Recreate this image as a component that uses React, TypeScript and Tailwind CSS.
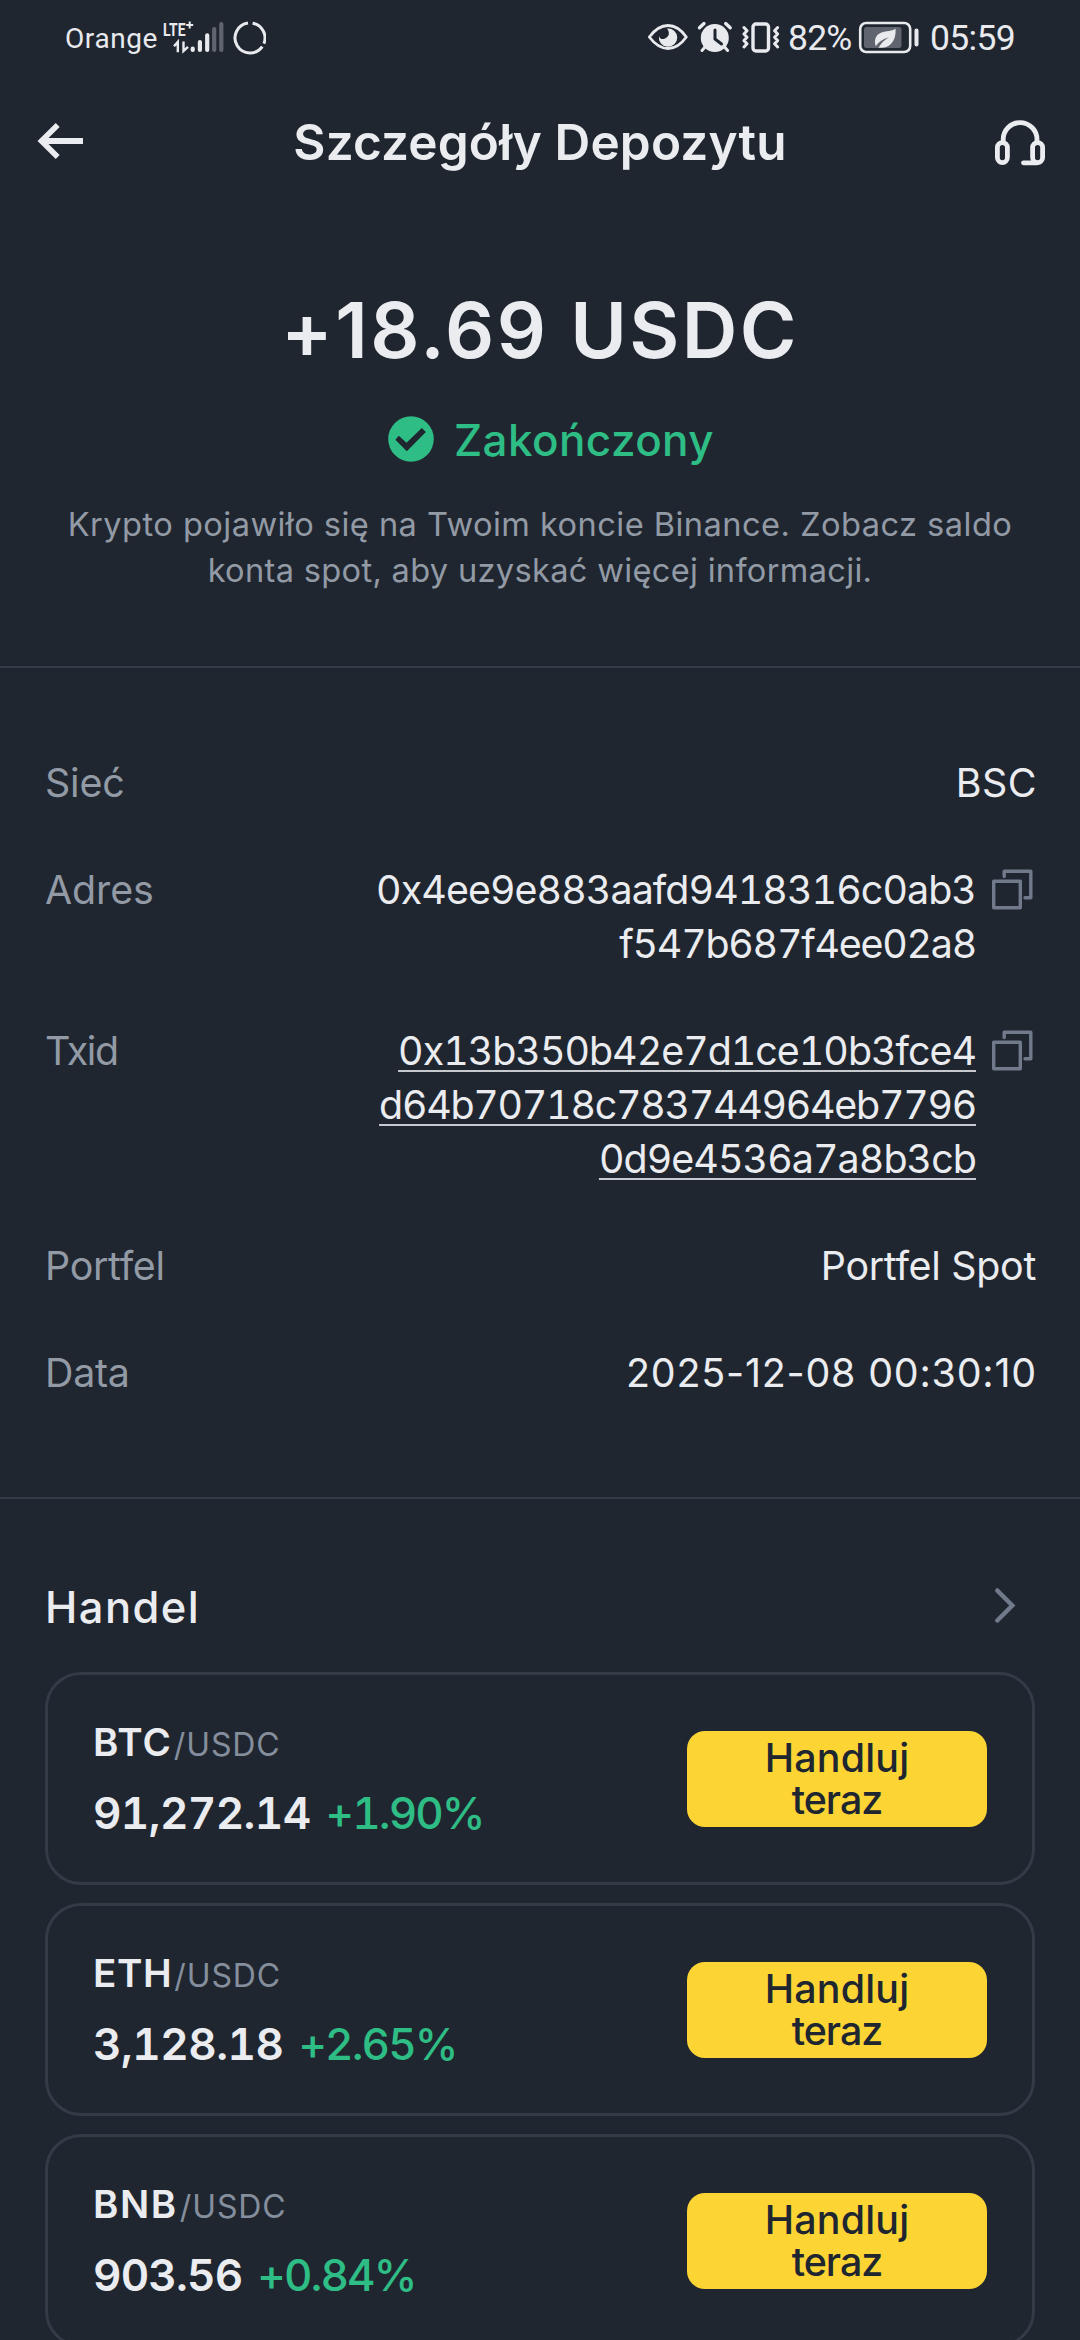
import type { ReactNode } from "react";

function SignalIcons() {
  return (
    <svg width="106" height="78" viewBox="160 0 106 78" fill="none">
      <text x="163" y="35.6" fontSize="19" fontWeight="700" textLength="22.5" lengthAdjust="spacingAndGlyphs" fill="#e8eaee" fontFamily="Roboto, sans-serif">
        LTE
      </text>
      <path d="M189.7 21.6v7M186.2 25.1h7" stroke="#e8eaee" strokeWidth="2" />
      <path d="M174 46.3L177.8 42V52.3M183.5 41.5V51L188 46.8" stroke="#e8eaee" strokeWidth="2.4" />
      <g strokeLinecap="round" strokeWidth="4.2">
        <path d="M192.7 48.5v1.5M199.9 42v8M207.2 35.3v14.7" stroke="#e8eaee" />
        <path d="M214.2 29v21M221.3 24v26" stroke="#5f646e" />
      </g>
      <path d="M252.6 23.2A15 15 0 0 1 263.9 43.6" stroke="#e8eaee" strokeWidth="3" />
      <path d="M262.3 46.6A15 15 0 1 1 248 23.1" stroke="#e8eaee" strokeWidth="3" />
    </svg>
  );
}

function EyeIcon() {
  return (
    <svg width="41" height="78" viewBox="647 0 41 78" fill="none">
      <path d="M649.3 37C655 29.500 661 25.500 668 25.500S681 29.500 686.300 37C681 44.500 675 48.500 668 48.500S655 44.500 649.300 37Z" stroke="#e8eaee" strokeWidth="2.8" strokeLinejoin="round" />
      <path d="M667 28.500A9.200 9.200 0 1 1 659 36Q660 40 664.500 38.800Q669.500 36.500 668.800 32.500Q668.500 30 667 28.500Z" fill="#e8eaee" />
    </svg>
  );
}

function AlarmIcon() {
  return (
    <svg width="36" height="78" viewBox="697 0 36 78" fill="none" stroke="#e8eaee">
      <circle cx="714.8" cy="38" r="14" fill="#e8eaee" stroke="none" />
      <path d="M699.500 27.800L704 23.600M730.200 27.800L725.700 23.600" strokeWidth="3.400" strokeLinecap="round" />
      <path d="M705 47L702 50.500M724.600 47L727.600 50.500" strokeWidth="3" strokeLinecap="round" />
      <path d="M715 30v9l6.500 5" stroke="#202630" strokeWidth="3" strokeLinecap="round" strokeLinejoin="round" />
    </svg>
  );
}

function VibrateIcon() {
  return (
    <svg width="40" height="78" viewBox="741 0 40 78" fill="none" stroke="#e8eaee">
      <rect x="753" y="24" width="15.500" height="27" rx="3" strokeWidth="3.400" />
      <path d="M744 27.500l3 3.200-3 3.300 3 3.300-3 3.300 3 3.200-3 3.200M777.600 27.500l-3 3.200 3 3.300-3 3.300 3 3.300-3 3.200 3 3.200" strokeWidth="3" strokeLinecap="round" strokeLinejoin="round" />
    </svg>
  );
}

function BatteryIcon() {
  return (
    <svg width="62" height="78" viewBox="858 0 62 78" fill="none">
      <rect x="860.200" y="23" width="50" height="29" rx="6" stroke="#e8eaee" strokeWidth="2.600" />
      <rect x="864" y="27" width="37.500" height="21" rx="2.500" fill="#5f646e" />
      <path d="M916.500 30.500v14" stroke="#e8eaee" strokeWidth="4" strokeLinecap="round" />
      <path d="M895.500 28.500C896.500 38 892 47.500 882 47.800H878.500C881 43 885 39.500 889 37.300C883 39 878.500 42 875.800 46.300C873.500 40 876 34.500 881.500 32.500C886.500 30.700 892 31.500 895.500 28.500Z" fill="#e8eaee" />
    </svg>
  );
}

function StatusBar() {
  return (
    <div className="flex h-[78px] shrink-0 items-center justify-between pl-[65px] pr-[65px] font-[Roboto,sans-serif] text-[#e8eaee]">
      <div className="flex items-center">
        <span className="w-[95px] whitespace-nowrap text-[28px] tracking-[0.6px]">Orange</span>
        <SignalIcons />
      </div>
      <div className="flex items-center text-[35.5px]">
        <EyeIcon />
        <div className="ml-[9px] flex">
          <AlarmIcon />
        </div>
        <div className="ml-2 flex">
          <VibrateIcon />
        </div>
        <span className="ml-[7px] w-[70px] whitespace-nowrap tracking-[-0.8px]">82%</span>
        <BatteryIcon />
        <span className="ml-[10px] w-[85px] whitespace-nowrap tracking-[-0.7px]">05:59</span>
      </div>
    </div>
  );
}

function CopyIcon() {
  return (
    <svg className="mt-[6px] shrink-0" width="44" height="42" viewBox="0 0 44 42" fill="none" stroke="#707a8a" strokeWidth="3.400" strokeLinejoin="round" strokeLinecap="round">
      <rect x="1.700" y="12.200" width="26.600" height="26.600" />
      <path d="M12.200 7.500V2.200H38.800V28.800H33" />
    </svg>
  );
}

function Row({ label, labelClass, children }: { label: string; labelClass: string; children: ReactNode }) {
  return (
    <div className="flex items-start justify-between">
      <span className={`text-[#929aa5] ${labelClass}`}>{label}</span>
      {children}
    </div>
  );
}

const pairs = [
  { base: "BTC", baseClass: "tracking-[1px]", price: "91,272.14", priceClass: "tracking-[-0.6px]", change: "+1.90%" },
  { base: "ETH", baseClass: "tracking-[0.6px]", price: "3,128.18", priceClass: "tracking-[-0.5px]", change: "+2.65%" },
  { base: "BNB", baseClass: "tracking-[1.6px]", price: "903.56", priceClass: "tracking-[-0.8px]", change: "+0.84%" },
];

function PairCard({ base, baseClass, price, priceClass, change }: (typeof pairs)[number]) {
  return (
    <div className="flex h-[213px] shrink-0 items-center justify-between rounded-[36px] border-[3px] border-[#333b47] pl-[45px] pr-[45px]">
      <div className="flex flex-col gap-[14px] pb-[3px] leading-[54px]">
        <div className="flex items-baseline">
          <span className={`text-[38.5px] font-semibold ${baseClass}`}>{base}</span>
          <span className="ml-[2px] text-[32px] tracking-[0.9px] text-[#848e9c]">/USDC</span>
        </div>
        <div className="flex items-baseline text-[44px] tabular-nums">
          <span className={`font-semibold ${priceClass}`}>{price}</span>
          <span className="ml-[15px] font-medium tracking-[-1.9px] text-[#2ebd85]">{change}</span>
        </div>
      </div>
      <button className="flex h-[96px] w-[300px] items-center justify-center rounded-[18px] bg-[#fcd535] text-[39.4px] font-medium leading-[42px] text-[#202630]">
        <span className="flex flex-col items-center">
          <span className="tracking-[0.2px]">Handluj</span>
          <span className="tracking-[-1px]">teraz</span>
        </span>
      </button>
    </div>
  );
}

export default function App() {
  return (
    <div className="flex h-[2340px] w-[1080px] flex-col overflow-hidden bg-[#202630] font-[Inter,sans-serif] text-[#eaecef]">
      <StatusBar />

      <header className="mt-[18px] flex h-[90px] shrink-0 items-center justify-between pl-9 pr-[34px]">
        <svg width="50" height="44" viewBox="36 119 50 44" fill="none" stroke="#eaecef" strokeWidth="5.600">
          <path d="M57.700 125L41.500 141L57.700 157" />
          <path d="M42 141H83" strokeWidth="6" />
        </svg>
        <h1 className="pt-[2px] text-[49.5px] font-semibold leading-[60px] tracking-[0.15px]">Szczegóły Depozytu</h1>
        <svg className="mt-[3px]" width="52" height="48" viewBox="994 119 52 48" fill="none" stroke="#eaecef" strokeWidth="4.800" strokeLinecap="round">
          <path d="M1003.200 142V139.500A16.900 16.900 0 0 1 1037 139.500V142" />
          <rect x="997.400" y="142.600" width="10" height="20" rx="5" />
          <rect x="1032.600" y="142.600" width="10" height="20" rx="5" />
          <path d="M1023.500 162.800H1037" />
        </svg>
      </header>

      <section className="mt-[97px] flex shrink-0 flex-col items-center">
        <div className="whitespace-nowrap text-[77px] font-semibold leading-[94px] tracking-[2.4px]">+18.69 USDC</div>
        <div className="mt-[36px] flex items-center gap-5 pl-[22px] text-[#2ebd85]">
          <svg className="-mt-[2px]" width="46" height="46" viewBox="388 415 46 46">
            <circle cx="411" cy="438" r="22.800" fill="#2ebd85" />
            <path d="M395.400 438.700L406.800 450.300L425.900 431L421.800 427L406.500 441.700L398.800 434.700Z" fill="#202630" />
          </svg>
          <span className="text-[44px] font-medium leading-[54px] tracking-[0.4px]">Zakończony</span>
        </div>
        <div className="mt-[34px] flex flex-col items-center whitespace-nowrap text-[32.6px] leading-[46px] text-[#929aa5]">
          <span className="tracking-[0.46px]">Krypto pojawiło się na Twoim koncie Binance. Zobacz saldo</span>
          <span className="tracking-[0.32px]">konta spot, aby uzyskać więcej informacji.</span>
        </div>
      </section>

      <div className="mt-[73px] h-[2px] shrink-0 bg-[#333b47]" />

      <section className="mt-[88px] flex shrink-0 flex-col gap-[53px] pl-[45px] pr-[44px] text-[39.4px] leading-[54px]">
        <Row label="Sieć" labelClass="tracking-[-0.15px]">
          <span className="-mr-px tracking-[0.5px]">BSC</span>
        </Row>
        <Row label="Adres" labelClass="tracking-[-0.1px]">
          <div className="flex items-start">
            <div className="mr-[16px] flex flex-col items-end tabular-nums">
              <span className="tracking-[-0.93px]">0x4ee9e883aafd9418316c0ab3</span>
              <span className="tracking-[-1.25px]">f547b687f4ee02a8</span>
            </div>
            <CopyIcon />
          </div>
        </Row>
        <Row label="Txid" labelClass="tracking-[-1.3px]">
          <div className="flex items-start">
            <div className="mr-[16px] flex flex-col items-end tabular-nums underline decoration-[#c6c9ce] decoration-2 underline-offset-[5px] [text-decoration-skip-ink:none]">
              <span className="tracking-[-1px]">0x13b350b42e7d1ce10b3fce4</span>
              <span className="tracking-[-1.27px]">d64b70718c783744964eb7796</span>
              <span className="tracking-[-0.93px]">0d9e4536a7a8b3cb</span>
            </div>
            <CopyIcon />
          </div>
        </Row>
        <Row label="Portfel" labelClass="tracking-[-0.3px]">
          <span className="tracking-[-0.3px]">Portfel Spot</span>
        </Row>
        <Row label="Data" labelClass="tracking-[-0.3px]">
          <span className="-mr-px tracking-[0.8px]">2025-12-08 00:30:10</span>
        </Row>
      </section>

      <div className="mt-[97px] h-[2px] shrink-0 bg-[#333b47]" />

      <section className="mt-[81px] flex shrink-0 flex-col px-[45px]">
        <div className="flex items-center justify-between pr-[18px]">
          <h2 className="text-[43.5px] font-medium leading-[54px] tracking-[1.4px]">Handel</h2>
          <svg className="-mt-[2px]" width="24" height="40" viewBox="993 1586 24 40" fill="none" stroke="#707a8a" strokeWidth="4.500" strokeLinecap="round">
            <path d="M997.300 1590.500L1012.300 1605.500L997.300 1620.500" />
          </svg>
        </div>
        <div className="mt-[38px] flex flex-col gap-[18px]">
          {pairs.map((p) => (
            <PairCard key={p.base} {...p} />
          ))}
        </div>
      </section>
    </div>
  );
}
